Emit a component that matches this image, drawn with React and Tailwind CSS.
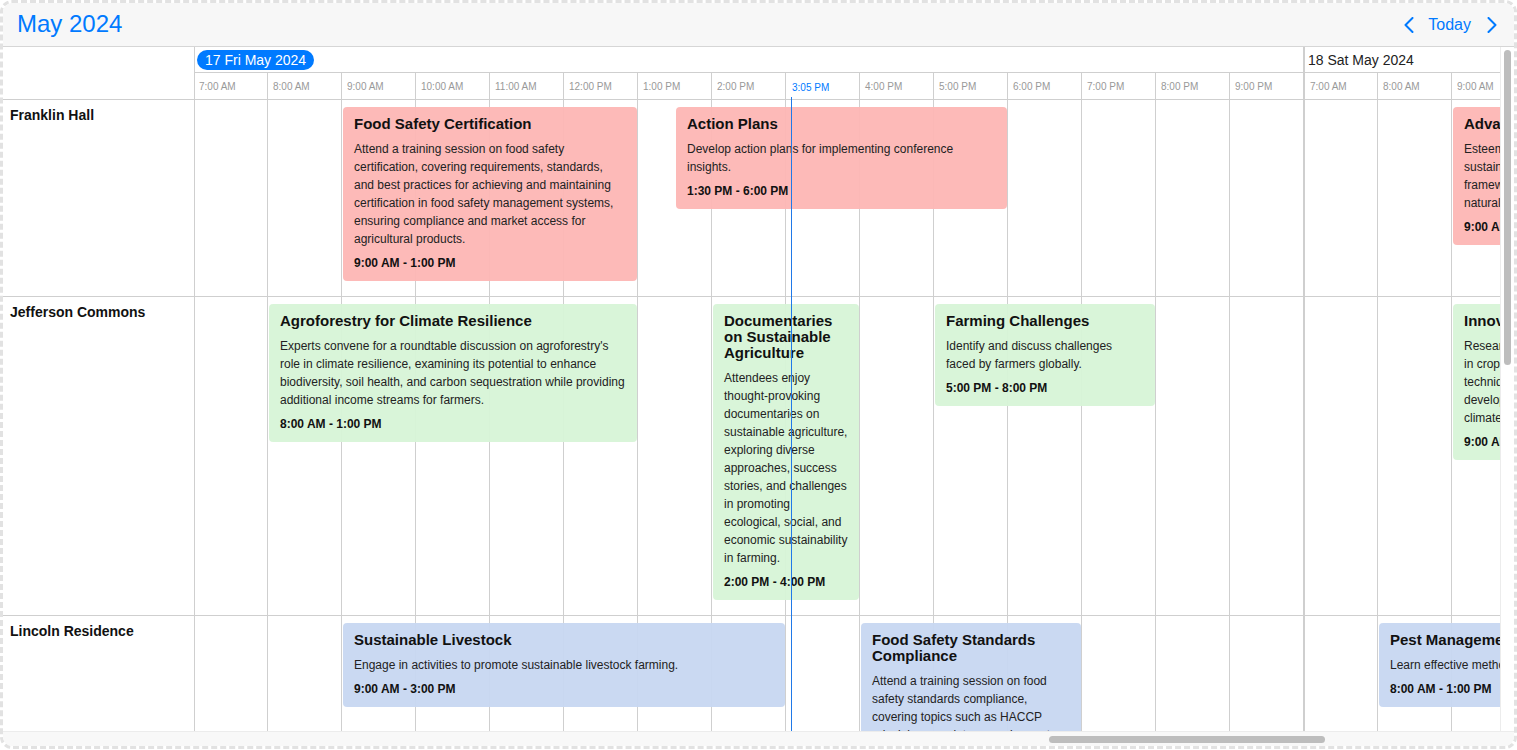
import React from 'react'

const hours = ['7:00 AM', '8:00 AM', '9:00 AM', '10:00 AM', '11:00 AM', '12:00 PM', '1:00 PM', '2:00 PM', '3:05 PM', '4:00 PM', '5:00 PM', '6:00 PM', '7:00 PM', '8:00 PM', '9:00 PM']
const nextDayHours = ['7:00 AM', '8:00 AM', '9:00 AM']

const rooms = [
    {
        name: 'Franklin Hall',
        events: [
            { title: 'Food Safety Certification', time: '9:00 AM - 1:00 PM', place: 'col-start-[5] col-span-8', color: 'bg-[#fdb6b4]/95', body: 'Attend a training session on food safety certification, covering requirements, standards, and best practices for achieving and maintaining certification in food safety management systems, ensuring compliance and market access for agricultural products.' },
            { title: 'Action Plans', time: '1:30 PM - 6:00 PM', place: 'col-start-[14] col-span-9', color: 'bg-[#fdb6b4]/95', body: 'Develop action plans for implementing conference insights.' },
            { title: 'Advanced Agroecology', time: '9:00 AM - 1:00 PM', place: 'col-start-[35] col-span-8', color: 'bg-[#fdb6b4]/95', body: 'Esteemed researchers share agroecology\nsustainable farming and ecosystem health\nframeworks that help farms work with\nnatural processes.' },
        ],
    },
    {
        name: 'Jefferson Commons',
        events: [
            { title: 'Agroforestry for Climate Resilience', time: '8:00 AM - 1:00 PM', place: 'col-start-[3] col-span-10', color: 'bg-[#d7f4d7]/95', body: "Experts convene for a roundtable discussion on agroforestry's role in climate resilience, examining its potential to enhance biodiversity, soil health, and carbon sequestration while providing additional income streams for farmers." },
            { title: 'Documentaries on Sustainable Agriculture', time: '2:00 PM - 4:00 PM', place: 'col-start-[15] col-span-4', color: 'bg-[#d7f4d7]/95', body: 'Attendees enjoy thought-provoking documentaries on sustainable agriculture, exploring diverse approaches, success stories, and challenges in promoting ecological, social, and economic sustainability in farming.' },
            { title: 'Farming Challenges', time: '5:00 PM - 8:00 PM', place: 'col-start-[21] col-span-6', color: 'bg-[#d7f4d7]/95', body: 'Identify and discuss challenges faced by farmers globally.' },
            { title: 'Innovations in Crop Science', time: '9:00 AM - 1:00 PM', place: 'col-start-[35] col-span-8', color: 'bg-[#d7f4d7]/95', body: 'Researchers present recent advances\nin crop science, covering breeding and\ntechniques, digital tools, and the ongoing\ndevelopment of resilient crops adapted to\nclimate conditions.' },
        ],
    },
    {
        name: 'Lincoln Residence',
        events: [
            { title: 'Sustainable Livestock', time: '9:00 AM - 3:00 PM', place: 'col-start-[5] col-span-12', color: 'bg-[#c7d7f1]/95', body: 'Engage in activities to promote sustainable livestock farming.' },
            { title: 'Food Safety Standards Compliance', time: '4:00 PM - 7:00 PM', place: 'col-start-[19] col-span-6', color: 'bg-[#c7d7f1]/95', body: 'Attend a training session on food safety standards compliance, covering topics such as HACCP principles, regulatory requirements, and audit preparation for food businesses.' },
            { title: 'Pest Management', time: '8:00 AM - 1:00 PM', place: 'col-start-[33] col-span-10', color: 'bg-[#c7d7f1]/95', body: 'Learn effective methods of integrated pest management.' },
        ],
    },
]

function Chevron({ left }) {
    return (
        <svg width="10" height="16" viewBox="0 0 10 16" fill="none" stroke="#007aff" strokeWidth="2" strokeLinecap="round" strokeLinejoin="round">
            <path d={left ? 'M8.5 1 L1.5 8 L8.5 15' : 'M1.5 1 L8.5 8 L1.5 15'} />
        </svg>
    )
}

function EventCard({ event }) {
    return (
        <div className={`${event.place} ${event.color} row-start-1 self-start mt-[7px] mb-[15px] mx-px rounded-[4px] px-[11px] py-[9px] min-w-0`}>
            <div className="text-[15px] leading-[16px] font-bold text-[#111] mb-2">{event.title}</div>
            <div className="text-[12px] leading-[18px] text-[#222] whitespace-pre-line">{event.body}</div>
            <div className="text-[12px] leading-[18px] font-bold text-[#111] mt-[6px] whitespace-nowrap">{event.time}</div>
        </div>
    )
}

function RoomRow({ room }) {
    return (
        <div className="flex border-b border-[#cfcfcf] w-max">
            <div className="w-[191px] shrink-0 pl-[7px] pt-[7px] text-[14px] leading-[16px] font-bold text-[#111]">{room.name}</div>
            <div className="grid grid-cols-[repeat(46,37px)]">
                <div className="col-span-full row-start-1 flex">
                    {hours.map((h, i) => (
                        <div key={h} className={`w-[74px] border-r border-[#cfcfcf] ${i === 0 ? 'border-l' : ''}`} />
                    ))}
                    {nextDayHours.map((h, i) => (
                        <div key={h} className={`w-[74px] border-r border-[#cfcfcf] ${i === 0 ? 'border-l' : ''}`} />
                    ))}
                </div>
                {room.events.map((e) => <EventCard key={e.title} event={e} />)}
            </div>
        </div>
    )
}

export default function App() {
    return (
        <div className="w-[1517px] h-[750px] overflow-hidden bg-white font-['Liberation_Sans',Arial,sans-serif]">
            <div className="h-[749px] border-[3px] border-dashed border-[#e2e2e2] rounded-[12px] overflow-hidden flex flex-col">
                <div className="h-[44px] shrink-0 bg-[#f7f7f7] border-b border-[#d6d6d6] flex items-center justify-between pl-[14px] pr-[17px]">
                    <div className="text-[24px] leading-[32px] text-[#007aff] pb-[2px]">May 2024</div>
                    <div className="flex items-center">
                        <Chevron left />
                        <span className="text-[16px] text-[#007aff] ml-[14px] mr-4">Today</span>
                        <Chevron />
                    </div>
                </div>

                <div className="flex-1 min-h-0 flex">
                    <div className="relative w-[1497px] overflow-hidden">
                        <div className="flex w-max">
                            <div className="w-[191px] shrink-0" />
                            <div className="w-[1109px] h-[26px] border-l border-b border-[#cfcfcf] px-[2px] pt-px">
                                <span className="inline-block h-[20px] rounded-full bg-[#007aff] px-2 text-[14px] leading-[20px] text-white">17 Fri May 2024</span>
                            </div>
                            <div className="h-[26px] w-[223px] border-l-2 border-b border-[#cfcfcf] pl-[3px] pt-[3px] text-[14px] leading-[20px] text-[#222]">18 Sat May 2024</div>
                        </div>
                        <div className="flex w-max h-[27px] border-b border-[#cfcfcf]">
                            <div className="w-[191px] shrink-0" />
                            {hours.map((h, i) => (
                                <div key={h} className={`w-[74px] border-r border-[#cfcfcf] text-[10px] leading-[14px] ${i === 0 ? 'border-l pl-1' : ''} ${h === '3:05 PM' ? 'text-[#007aff] pt-2 pl-[6px]' : 'text-[#999] pt-[7px]'} ${i !== 0 && h !== '3:05 PM' ? 'pl-[5px]' : ''}`}>{h}</div>
                            ))}
                            {nextDayHours.map((h, i) => (
                                <div key={h} className={`w-[74px] border-r border-[#cfcfcf] pl-[5px] pt-[7px] text-[10px] leading-[14px] text-[#999] ${i === 0 ? 'border-l' : ''}`}>{h}</div>
                            ))}
                        </div>
                        {rooms.map((r) => <RoomRow key={r.name} room={r} />)}
                        {/* current time marker */}
                        <div className="absolute left-[788px] top-[50px] bottom-0 w-px bg-[#2079e8]" />
                    </div>
                    <div className="w-[14px] shrink-0 border-l border-[#ececec] bg-white pt-[3px] pl-[3px]">
                        <div className="w-[7px] h-[315px] rounded-full bg-[#bdbdbd]" />
                    </div>
                </div>

                <div className="h-[15px] shrink-0 bg-[#f8f8f8] border-t border-[#ececec] pt-[4px] pl-[1046px]">
                    <div className="w-[276px] h-[7px] rounded-full bg-[#bdbdbd]" />
                </div>
            </div>
        </div>
    )
}
